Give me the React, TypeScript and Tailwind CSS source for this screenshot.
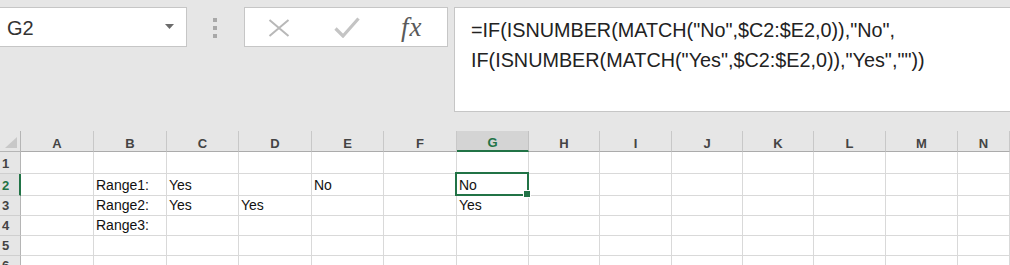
const COLS = ['A', 'B', 'C', 'D', 'E', 'F', 'G', 'H', 'I', 'J', 'K', 'L', 'M', 'N'];

const ROWS: { num: string; h: string; cells: Record<string, string> }[] = [
  { num: '1', h: 'h-[22px]', cells: {} },
  { num: '2', h: 'h-[22px]', cells: { B: 'Range1:', C: 'Yes', E: 'No', G: 'No' } },
  { num: '3', h: 'h-[20px]', cells: { B: 'Range2:', C: 'Yes', D: 'Yes', G: 'Yes' } },
  { num: '4', h: 'h-[20px]', cells: { B: 'Range3:' } },
  { num: '5', h: 'h-[20px]', cells: {} },
  { num: '6', h: 'h-[20px]', cells: {} },
];

const gridCols =
  'grid grid-cols-[21px_73px_73px_72px_73px_72px_73px_72px_71px_72px_71px_71px_72px_72px_1fr]';

function FormulaBar() {
  return (
    <div className="flex h-[131px] items-start pt-[7px]">
      <div className="flex h-[40px] w-[187px] items-start justify-between border border-l-0 border-[#c6c6c6] bg-white pl-[7px] pr-[12px] pt-[9px]">
        <span className="text-[20px] leading-[23px] text-[#333]">G2</span>
        <svg width="9" height="5" viewBox="0 0 9 5" className="mt-[7px]">
          <path d="M0 0 L9 0 L4.5 5 Z" fill="#6b6b6b" />
        </svg>
      </div>

      <div className="ml-[26px] mt-[11px] flex flex-col gap-[4px]">
        <div className="h-[4px] w-[4px] bg-[#a8a8a8]" />
        <div className="h-[4px] w-[4px] bg-[#a8a8a8]" />
        <div className="h-[4px] w-[4px] bg-[#a8a8a8]" />
      </div>

      <div className="ml-[27px] flex h-[40px] w-[204px] items-center border border-[#c6c6c6] bg-white pl-[23px]">
        <svg width="22" height="18" viewBox="0 0 22 18" className="mt-[1px]">
          <path d="M1.5 1 L20.5 17 M20.5 1 L1.5 17" stroke="#b8b8b8" strokeWidth="2" fill="none" />
        </svg>
        <svg width="26" height="21" viewBox="0 0 26 21" className="ml-[44px]">
          <path d="M1.5 11.5 L9 19 L24.5 1.5" stroke="#c4c4c4" strokeWidth="3.2" fill="none" />
        </svg>
        <span className="ml-[41px] font-['Liberation_Serif',serif] text-[27px] italic leading-none tracking-[1px] text-[#5a5a5a]">
          fx
        </span>
      </div>

      <div className="ml-[6px] h-[105px] flex-1 border border-r-0 border-[#c6c6c6] bg-white pl-[16px] pt-[7px] text-[19.8px] leading-[30px] text-[#222]">
        <div>=IF(ISNUMBER(MATCH("No",$C2:$E2,0)),"No",</div>
        <div>IF(ISNUMBER(MATCH("Yes",$C2:$E2,0)),"Yes",""))</div>
      </div>
    </div>
  );
}

function HeaderRow() {
  return (
    <div className={`${gridCols} h-[21px]`}>
      <div className="relative border-b border-r border-[#b5b5b5] bg-[#e6e6e6]">
        <svg width="12" height="11" viewBox="0 0 12 11" className="absolute left-[5px] top-[6px]">
          <path d="M12 0 L12 11 L0 11 Z" fill="#c8c8c8" />
        </svg>
      </div>
      {COLS.map((c) =>
        c === 'G' ? (
          <div
            key={c}
            className="flex items-end justify-center border-b-2 border-r border-b-[#217346] border-r-[#c2c2c2] bg-[#d4d4d4] text-[13px] font-bold leading-[15px] text-[#217346]"
          >
            {c}
          </div>
        ) : (
          <div
            key={c}
            className="flex items-end justify-center border-b border-r border-b-[#ababab] border-r-[#c8c8c8] bg-[#e6e6e6] text-[13px] font-bold leading-[15px] text-[#444]"
          >
            {c}
          </div>
        ),
      )}
    </div>
  );
}

function DataRow({ row }: { row: (typeof ROWS)[number] }) {
  const selectedRow = row.num === '2';
  return (
    <div className={`${gridCols} ${row.h}`}>
      {selectedRow ? (
        <div className="flex items-end border-b border-r-2 border-b-[#cfcfcf] border-r-[#217346] bg-[#e1e1e1] pb-[2px] pl-[2px] text-[13px] font-bold leading-[15px] text-[#217346]">
          {row.num}
        </div>
      ) : (
        <div className="flex items-end border-b border-r border-b-[#cfcfcf] border-r-[#b5b5b5] bg-[#e6e6e6] pb-[2px] pl-[2px] text-[13px] font-bold leading-[15px] text-[#444]">
          {row.num}
        </div>
      )}
      {COLS.map((c) => {
        const isActive = selectedRow && c === 'G';
        return (
          <div
            key={c}
            className="relative flex items-end border-b border-r border-[#d9d9d9] bg-white pb-[2px] pl-[2px] text-[14px] leading-[16px] text-[#111]"
          >
            <span className="whitespace-nowrap">{row.cells[c] ?? ''}</span>
            {isActive && (
              <>
                <div className="absolute -bottom-[1px] -left-[2px] -right-[1px] -top-[2px] z-10 border-2 border-[#217346]" />
                <div className="absolute left-[66px] top-[16px] z-20 h-[8px] w-[8px] border border-white bg-[#217346]" />
              </>
            )}
          </div>
        );
      })}
    </div>
  );
}

export default function App() {
  return (
    <div className="h-[265px] w-[1010px] overflow-hidden bg-[#e6e6e6] font-['Liberation_Sans',Arial,sans-serif]">
      <FormulaBar />
      <HeaderRow />
      {ROWS.map((r) => (
        <DataRow key={r.num} row={r} />
      ))}
    </div>
  );
}
